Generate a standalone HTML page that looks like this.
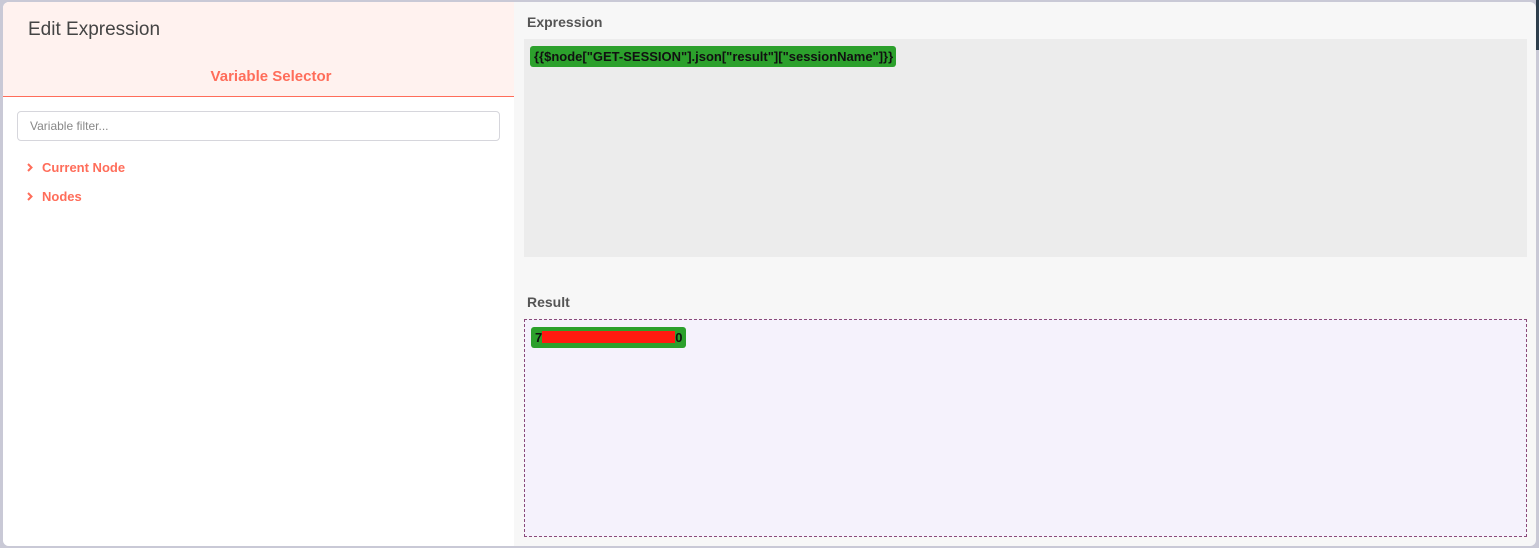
<!DOCTYPE html>
<html><head><style>
*{box-sizing:border-box;margin:0;padding:0}
body{width:1539px;height:548px;background:#c9c9d6;font-family:"Liberation Sans",sans-serif;position:relative;overflow:hidden}
.dlg{position:absolute;left:3px;top:2px;width:1533px;height:544px;background:#f7f7f7;border-radius:6px;overflow:hidden}
.left{position:absolute;left:0;top:0;width:511px;height:544px;background:#fff}
.head{height:95px;background:#fff2ef;border-bottom:1px solid #ff6d5a;position:relative}
.title{position:absolute;left:25px;top:17px;font-size:19px;color:#444}
.vs{position:absolute;left:0;width:536px;top:66px;text-align:center;font-size:15px;color:#ff6d5a;font-weight:bold}
.filter{position:absolute;left:14px;top:109px;width:483px;height:30px;border:1px solid #d6d6dc;border-radius:4px;font-size:12px;color:#888;padding:7px 12px}
.item{position:absolute;left:24px;font-size:13px;font-weight:bold;color:#ff6d5a}
.item svg{margin-right:9px;vertical-align:0}
.lab{position:absolute;font-size:14px;font-weight:bold;color:#555}
.expr{position:absolute;left:521px;top:37px;width:1003px;height:218px;background:#ececec}
.res{position:absolute;left:521px;top:317px;width:1003px;height:218px;background:#f5f2fc;border:1px dashed #8a4a7a}
.tag{position:absolute;background:#2ca02c;border-radius:3px;font-weight:bold;font-size:13px;color:#111;padding:3px 4px;height:21px;white-space:nowrap}
</style></head><body>
<div style="position:absolute;right:0;top:0;width:3px;height:50px;background:#2e3e4c"></div>
<div class="dlg">
<div class="left">
<div class="head"><div class="title">Edit Expression</div><div class="vs">Variable Selector</div></div>
<div class="filter">Variable filter...</div>
<div class="item" style="top:158px"><svg width="6" height="9" viewBox="0 0 6 9"><path d="M1 1 L4.5 4.5 L1 8" stroke="#ff6d5a" stroke-width="2" fill="none"/></svg>Current Node</div>
<div class="item" style="top:187px"><svg width="6" height="9" viewBox="0 0 6 9"><path d="M1 1 L4.5 4.5 L1 8" stroke="#ff6d5a" stroke-width="2" fill="none"/></svg>Nodes</div>
</div>
<div class="lab" style="left:524px;top:12px">Expression</div>
<div class="expr"><div class="tag" style="left:6px;top:7px;width:366px">{{$node["GET-SESSION"].json["result"]["sessionName"]}}</div></div>
<div class="lab" style="left:524px;top:292px">Result</div>
<div class="res"><div class="tag" style="left:6px;top:7px;width:155px">7<span style="display:inline-block;width:133px;height:12px;background:#ff1a10;vertical-align:-1px"></span>0</div></div>
</div>
</body></html>
